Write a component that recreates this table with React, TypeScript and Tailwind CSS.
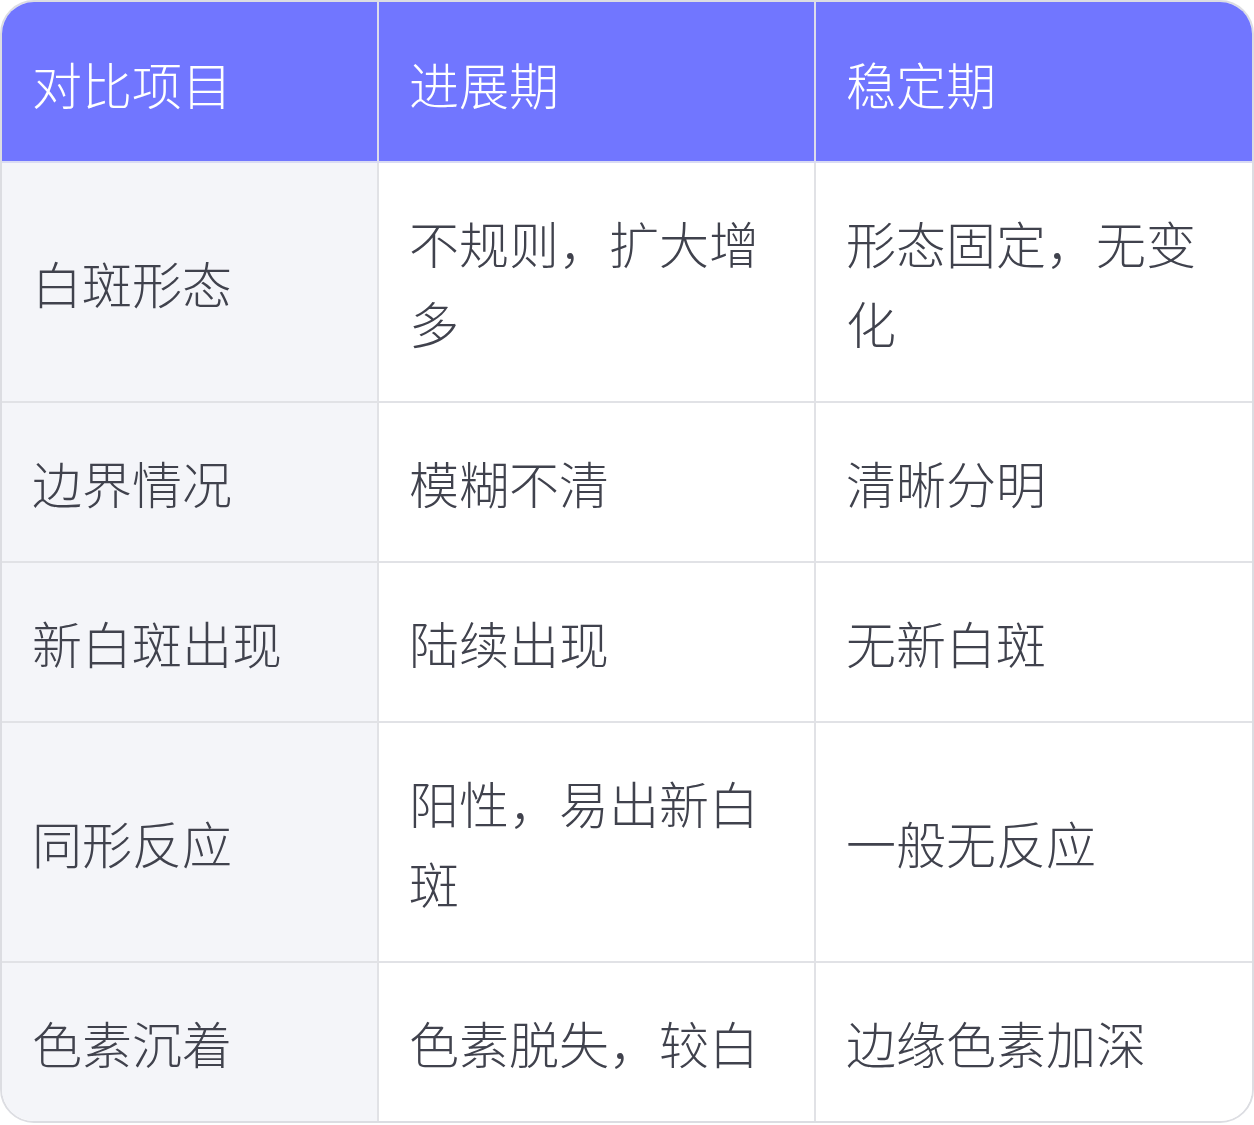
const rows: [string, string, string][] = [
  ['白斑形态', '不规则，扩大增多', '形态固定，无变化'],
  ['边界情况', '模糊不清', '清晰分明'],
  ['新白斑出现', '陆续出现', '无新白斑'],
  ['同形反应', '阳性，易出新白斑', '一般无反应'],
  ['色素沉着', '色素脱失，较白', '边缘色素加深'],
];

export default function App() {
  return (
    <div className="w-[1254px] bg-white font-['Noto_Sans_CJK_SC','Noto_Sans',sans-serif] text-[50px] leading-[80px] font-light">
      <div className="overflow-hidden rounded-[34px] border-2 border-[#dcdde2]">
        <div className="grid grid-cols-[377px_437px_1fr]">
          {/* 表头 */}
          {['对比项目', '进展期', '稳定期'].map((h, i) => (
            <div
              key={h}
              className={`flex h-[161px] items-center bg-[#7176ff] px-[30px] pt-[2px] text-white border-b-2 border-b-[#d9dbf4] ${
                i < 2 ? 'border-r-2 border-r-[#dcdcec]' : ''
              }`}
            >
              {h}
            </div>
          ))}

          {/* 内容 */}
          {rows.map((r, ri) =>
            r.map((c, ci) => (
              <div
                key={`${ri}-${ci}`}
                className={`flex items-center px-[30px] py-[39px] text-[#40424d] ${
                  ci === 0 ? 'bg-[#f4f5f9]' : 'bg-white'
                } ${ci < 2 ? 'border-r-2 border-r-[#e1e2e6]' : ''} ${
                  ri < rows.length - 1 ? 'border-b-2 border-b-[#e1e2e6]' : ''
                }`}
              >
                <span>{c}</span>
              </div>
            ))
          )}
        </div>
      </div>
    </div>
  );
}
